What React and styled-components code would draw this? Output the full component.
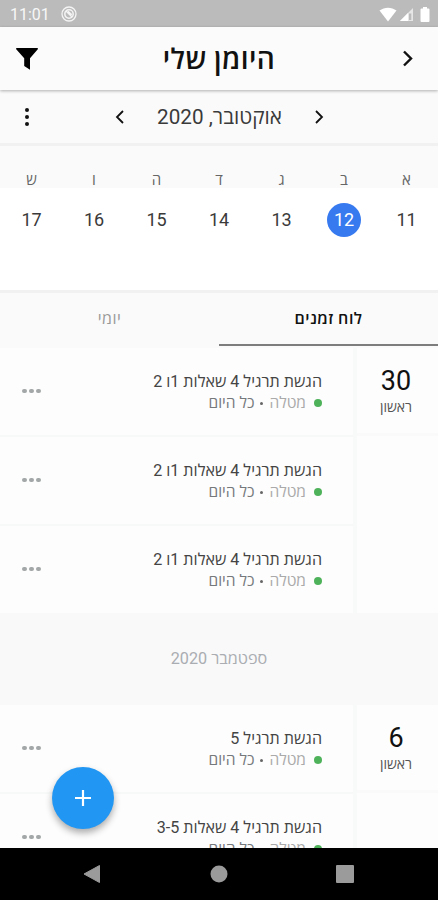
import styled, { createGlobalStyle } from 'styled-components';

const days = [
	{ letter: 'א', number: 11 },
	{ letter: 'ב', number: 12, selected: true },
	{ letter: 'ג', number: 13 },
	{ letter: 'ד', number: 14 },
	{ letter: 'ה', number: 15 },
	{ letter: 'ו', number: 16 },
	{ letter: 'ש', number: 17 },
];

const october = [
	{ id: 1, title: 'הגשת תרגיל 4 שאלות 1ו 2' },
	{ id: 2, title: 'הגשת תרגיל 4 שאלות 1ו 2' },
	{ id: 3, title: 'הגשת תרגיל 4 שאלות 1ו 2' },
];

const september = [
	{ id: 4, title: 'הגשת תרגיל 5' },
	{ id: 5, title: 'הגשת תרגיל 4 שאלות 3-5' },
];

function Chevron({ left, size = 18, width = 2 }) {
	return (
		<svg width={size} height={size} viewBox="0 0 18 18" fill="none" stroke="#111" strokeWidth={width}>
			<path d={left ? 'M12 3L6 9l6 6' : 'M6 3l6 6-6 6'} />
		</svg>
	);
}

function DayGroup({ day, tasks }) {
	return (
		<Group>
			<DateColumn>
				<DateCard>
					<DateNumber>{day}</DateNumber>
					<DateName>ראשון</DateName>
				</DateCard>
			</DateColumn>
			<TaskList>
				{tasks.map((task) => (
					<Task key={task.id}>
						<div>
							<TaskTitle>{task.title}</TaskTitle>
							<TaskInfo>
								<Dot />
								<Kind>מטלה</Kind>
								<Bullet />
								<span>כל היום</span>
							</TaskInfo>
						</div>
						<MoreDots>
							<i /><i /><i />
						</MoreDots>
					</Task>
				))}
			</TaskList>
		</Group>
	);
}

export default function App() {
	return (
		<Screen>
			<GlobalStyle />
			<StatusBar>
				<Clock>11:01</Clock>
				<svg width="16" height="16" viewBox="0 0 16 16" fill="none" stroke="#f4f4f4">
					<circle cx="8" cy="8" r="7" strokeWidth="1.3" />
					<circle cx="8" cy="8" r="4.2" strokeWidth="1.5" />
					<path d="M5 5l6 6M7 5.2l3.8 3.6" strokeWidth="1.4" />
				</svg>
				<StatusIcons>
					<svg width="18" height="15" viewBox="0 0 18 15" fill="#fff">
						<path d="M0.5 3.6C5.5-0.3 12.5-0.3 17.5 3.6L9 14.5z" />
					</svg>
					<svg width="15" height="15" viewBox="0 0 15 15">
						<path d="M14 1v13H1z" fill="#e6e6e6" />
						<path d="M10 6.5h2.3V13H10z" fill="#bbb" />
						<path d="M9 6v8H1z" fill="#fff" />
					</svg>
					<svg width="10" height="15" viewBox="0 0 10 15" fill="#fff">
						<path d="M3 0h4v1.5h1.5a1 1 0 0 1 1 1V14a1 1 0 0 1-1 1h-7a1 1 0 0 1-1-1V2.5a1 1 0 0 1 1-1H3z" />
					</svg>
				</StatusIcons>
			</StatusBar>

			<Header>
				<IconSlot><Chevron size={21} width={2.1} /></IconSlot>
				<Title>היומן שלי</Title>
				<IconSlot>
					<svg width="24" height="24" viewBox="0 0 24 24" fill="#000">
						<path d="M1.2 1H22.8V2.2L15 11.3V22.8L9.2 19V11.3L1.2 2.2z" />
					</svg>
				</IconSlot>
			</Header>

			<MonthBar>
				<MonthNav>
					<Chevron size={18} width={1.8} />
					<MonthName>אוקטובר, 2020</MonthName>
					<Chevron left size={18} width={1.8} />
				</MonthNav>
				<Kebab><i /><i /><i /></Kebab>
			</MonthBar>

			<WeekLetters>
				{days.map((d) => <span key={d.number}>{d.letter}</span>)}
			</WeekLetters>
			<WeekNumbers>
				{days.map((d) => <DayNumber key={d.number} $selected={d.selected}>{d.number}</DayNumber>)}
			</WeekNumbers>

			<Tabs>
				<Tab $active>לוח זמנים</Tab>
				<Tab>יומי</Tab>
			</Tabs>

			<Agenda>
				<DayGroup day={30} tasks={october} />
				<MonthSeparator>ספטמבר 2020</MonthSeparator>
				<DayGroup day={6} tasks={september} />
			</Agenda>

			<AddButton aria-label="הוספה">
				<svg width="18" height="18" viewBox="0 0 18 18" stroke="#fff" strokeWidth="2.2">
					<path d="M9 1v16M1 9h16" />
				</svg>
			</AddButton>

			<NavBar>
				<svg width="18" height="20" viewBox="0 0 18 20" fill="#9b9b9b" stroke="#9b9b9b" strokeLinejoin="round">
					<path d="M16.5 1.5v17L1 10z" />
				</svg>
				<svg width="18" height="18" viewBox="0 0 18 18" fill="#9b9b9b">
					<circle cx="9" cy="9" r="8.5" />
				</svg>
				<svg width="18" height="18" viewBox="0 0 18 18" fill="#9b9b9b">
					<rect width="18" height="18" rx="1" />
				</svg>
			</NavBar>
		</Screen>
	);
}

const GlobalStyle = createGlobalStyle`
	* { box-sizing: border-box; }
	body { margin: 0; }
	svg { display: block; flex: none; }
`;

const Screen = styled.div`
	position: relative;
	display: flex;
	flex-direction: column;
	direction: rtl;
	width: 438px;
	height: 900px;
	overflow: hidden;
	background: #fafafa;
	color: #222;
	font-family: Roboto, 'Open Sans', sans-serif;
`;

const StatusBar = styled.div`
	direction: ltr;
	display: flex;
	align-items: center;
	flex: none;
	height: 27px;
	padding: 1px 8px 0 10px;
	background: #bbb;
`;

const Clock = styled.span`
	width: 51px;
	padding-top: 1px;
	color: #f7f7f7;
	font-size: 16px;
	line-height: 20px;
`;

const StatusIcons = styled.div`
	display: flex;
	align-items: center;
	gap: 2px;
	margin-left: auto;
	svg:last-child { margin-left: 4px; }
`;

const Header = styled.header`
	display: flex;
	align-items: center;
	justify-content: space-between;
	flex: none;
	height: 63px;
	padding: 0 15px;
	z-index: 1;
	background: #fbfbfb;
	box-shadow: 0 1px 3px rgba(0, 0, 0, 0.3);
`;

const IconSlot = styled.div`
	display: flex;
	justify-content: center;
	width: 32px;
	&:last-child {
		justify-content: flex-end;
	}
`;

const Title = styled.h1`
	margin: 0;
	padding: 3px 0 0;
	color: #111;
	font-size: 28px;
	font-weight: 600;
	letter-spacing: 0.4px;
	line-height: 36px;
`;

const MonthBar = styled.div`
	display: flex;
	align-items: center;
	flex: none;
	height: 56px;
	padding: 0 110px 0 25px;
	border-bottom: 3px solid #f1f1f1;
`;

const MonthNav = styled.div`
	display: flex;
	align-items: center;
	justify-content: space-between;
	width: 217px;
`;

const MonthName = styled.span`
	color: #3a3a3a;
	font-size: 20.7px;
	line-height: 28px;
`;

const Kebab = styled.div`
	display: flex;
	flex-direction: column;
	gap: 3px;
	margin-right: auto;
	i {
		width: 4px;
		height: 4px;
		border-radius: 50%;
		background: #111;
	}
`;

const WeekLetters = styled.div`
	display: grid;
	grid-template-columns: repeat(7, 62.5px);
	justify-content: center;
	flex: none;
	height: 42px;
	padding-top: 23px;
	color: #666;
	font-size: 15px;
	line-height: 22px;
	text-align: center;
`;

const WeekNumbers = styled.div`
	display: grid;
	grid-template-columns: repeat(7, 62.5px);
	justify-content: center;
	justify-items: center;
	flex: none;
	height: 105px;
	padding-top: 15px;
	border-bottom: 3px solid #f1f1f1;
	background: #fff;
`;

const DayNumber = styled.span`
	width: 34px;
	height: 34px;
	border-radius: 50%;
	background: ${(props) => (props.$selected ? '#377af0' : 'transparent')};
	color: ${(props) => (props.$selected ? '#fff' : '#3a3a3a')};
	font-size: 18px;
	font-weight: 400;
	line-height: 34px;
	text-align: center;
`;

const Tabs = styled.div`
	display: grid;
	grid-template-columns: 1fr 1fr;
	flex: none;
	height: 54px;
	padding-bottom: 1px;
`;

const Tab = styled.div`
	border-bottom: 2px solid ${(props) => (props.$active ? '#7d7d7d' : 'transparent')};
	color: ${(props) => (props.$active ? '#111' : '#999')};
	font-size: 16px;
	font-weight: ${(props) => (props.$active ? 600 : 400)};
	letter-spacing: 0.5px;
	line-height: 51px;
	text-align: center;
`;

const Agenda = styled.main`
	flex: 1;
	min-height: 0;
	padding-top: 1px;
	overflow: hidden;
`;

const Group = styled.section`
	display: flex;
`;

const DateColumn = styled.div`
	width: 85px;
	border-left: 4px solid #f8faf9;
	background: #fdfdfd;
`;

const DateCard = styled.div`
	height: 88px;
	padding: 16px 3px 0 0;
	border-bottom: 3px solid #fafafa;
	text-align: center;
`;

const DateNumber = styled.div`
	color: #111;
	font-size: 27px;
	line-height: 34px;
`;

const DateName = styled.div`
	color: #555;
	font-size: 14px;
	line-height: 18px;
`;

const TaskList = styled.div`
	flex: 1;
	background: #fdfdfd;
`;

const Task = styled.article`
	display: flex;
	justify-content: space-between;
	height: 89px;
	padding: 23px 31px 0 22px;
	border-bottom: 2px solid #f7f8f8;
	&:last-child {
		height: 87px;
		border-bottom: none;
	}
`;

const TaskTitle = styled.div`
	color: #444;
	font-size: 16.1px;
	line-height: 22px;
`;

const TaskInfo = styled.div`
	display: flex;
	align-items: center;
	color: #76797c;
	font-size: 15.5px;
	line-height: 20px;
`;

const Dot = styled.i`
	width: 8px;
	height: 8px;
	margin-left: 8px;
	border-radius: 50%;
	background: #4eb25a;
`;

const Kind = styled.span`
	color: #aaa;
`;

const Bullet = styled.i`
	width: 3px;
	height: 3px;
	margin: 0 6px;
	border-radius: 50%;
	background: #666;
`;

const MoreDots = styled.div`
	display: flex;
	gap: 2.5px;
	padding-top: 17.5px;
	i {
		width: 4.5px;
		height: 4.5px;
		border-radius: 50%;
		background: #a3a7a7;
	}
`;

const MonthSeparator = styled.div`
	height: 92px;
	background: #f9f9f9;
	color: #aaadb2;
	font-size: 16.2px;
	line-height: 92px;
	text-align: center;
`;

// floats over the agenda
const AddButton = styled.button`
	position: absolute;
	left: 52px;
	bottom: 71px;
	display: flex;
	align-items: center;
	justify-content: center;
	width: 62px;
	height: 62px;
	padding: 0;
	border: none;
	border-radius: 50%;
	background: #2196f3;
	box-shadow: 0 4px 7px rgba(0, 0, 0, 0.32);
`;

const NavBar = styled.nav`
	direction: ltr;
	display: flex;
	align-items: center;
	justify-content: space-between;
	flex: none;
	height: 52px;
	padding: 0 84px 0 83px;
	background: #000;
	z-index: 1;
`;
